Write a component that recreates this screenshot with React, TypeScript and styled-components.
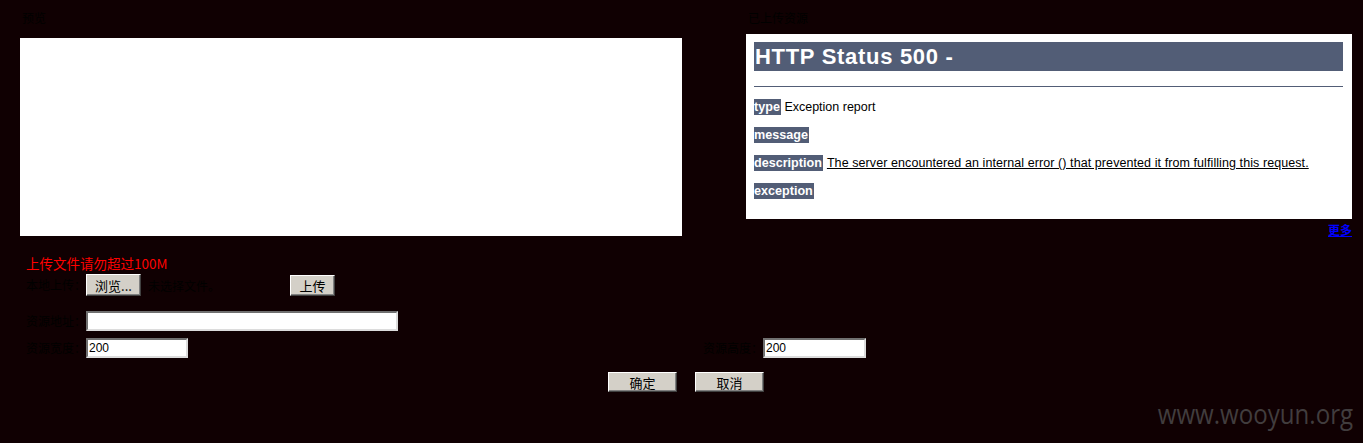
import React from "react";
import styled, { createGlobalStyle } from "styled-components";

const GlobalStyle = createGlobalStyle`
  html, body {
    margin: 0;
    padding: 0;
    background: #100002;
  }
  body {
    font-family: "Noto Sans CJK SC", "Liberation Sans", sans-serif;
    font-size: 12px;
    color: #000;
  }
`;

const Page = styled.div`
  position: relative;
  width: 1363px;
  height: 443px;
  overflow: hidden;
  background: #100002;
`;

const TopRow = styled.div`
  display: flex;
  align-items: flex-start;
  padding: 10px 11px 0 20px;
`;

const Column = styled.div<{ $width: number }>`
  display: flex;
  flex-direction: column;
  width: ${(p) => p.$width}px;
  &:last-child {
    margin-left: auto;
  }
`;

const SectionLabel = styled.div<{ $gap: number }>`
  font-size: 12px;
  line-height: 16px;
  height: 16px;
  margin: 0 0 ${(p) => p.$gap}px 2px;
  color: #000;
  white-space: nowrap;
`;

const PreviewBox = styled.div`
  height: 198px;
  background: #fff;
`;

const ReportFrame = styled.div`
  height: 185px;
  box-sizing: border-box;
  padding: 8px 9px 0 8px;
  background: #fff;
  overflow: hidden;
  font-family: "Liberation Sans", Arial, sans-serif;
  font-size: 12.5px;
  color: #000;
`;

const ReportTitle = styled.h1`
  margin: 0;
  height: 29px;
  padding-left: 1px;
  background: #525d76;
  color: #fff;
  font-family: "Liberation Sans", Arial, sans-serif;
  font-weight: bold;
  font-size: 22px;
  letter-spacing: 0.7px;
  line-height: 30px;
`;

const ReportRule = styled.div`
  height: 1px;
  margin-top: 15px;
  background: #525d76;
`;

const ReportLine = styled.p`
  margin: 12px 0 0 0;
  line-height: 16px;
  white-space: nowrap;
`;

const Tag = styled.b`
  display: inline-block;
  height: 16px;
  padding: 0 1px 0 0;
  background: #525d76;
  color: #fff;
  font-size: 12.6px;
  line-height: 16px;
  vertical-align: top;
`;

const Detail = styled.u`
  margin-left: 4px;
  letter-spacing: 0.08px;
`;

const MoreLink = styled.a`
  align-self: flex-end;
  margin-top: 3px;
  color: #0000ff;
  font-weight: bold;
  font-size: 12px;
  line-height: 16px;
  text-decoration: underline;
  cursor: pointer;
`;

const UploadForm = styled.div`
  display: flex;
  flex-direction: column;
  padding-left: 26px;
`;

const Warning = styled.div`
  margin-top: 16px;
  color: #ff0000;
  font-size: 13.5px;
  line-height: 18px;
`;

const FieldRow = styled.div<{ $top: number }>`
  display: flex;
  align-items: center;
  margin-top: ${(p) => p.$top}px;
`;

const FieldLabel = styled.span`
  width: 60px;
  font-size: 12px;
  line-height: 16px;
  color: #000;
  white-space: nowrap;
`;

const ClassicButton = styled.button<{ $w: number; $h?: number }>`
  width: ${(p) => p.$w}px;
  height: ${(p) => p.$h ?? 21}px;
  padding: 0;
  box-sizing: border-box;
  background: #d4d0c8;
  border: 1px solid;
  border-color: #fff #404040 #404040 #fff;
  box-shadow: inset -1px -1px 0 #808080;
  font-family: "Noto Sans CJK SC", sans-serif;
  font-size: 13px;
  line-height: 17px;
  color: #000;
`;

const FileStatus = styled.span`
  flex: 0 0 142px;
  margin-left: 7px;
  font-size: 12px;
  color: #000;
  white-space: nowrap;
`;

const TextField = styled.input<{ $w: number }>`
  width: ${(p) => p.$w}px;
  height: 20px;
  box-sizing: border-box;
  margin: 0;
  padding: 0 1px;
  background: #fff;
  border: 2px solid;
  border-color: #707070 #dcdcdc #dcdcdc #707070;
  font-family: "Liberation Sans", Arial, sans-serif;
  font-size: 12px;
  color: #000;
  outline: none;
`;

const FieldGroup = styled.div<{ $offset?: number }>`
  display: flex;
  align-items: center;
  margin-left: ${(p) => p.$offset ?? 0}px;
`;

const ActionRow = styled.div`
  display: flex;
  gap: 18px;
  margin-top: 14px;
  padding-left: 582px;
`;

const Watermark = styled.div`
  position: absolute;
  right: 10px;
  bottom: 13px;
  font-family: "Open Sans", sans-serif;
  font-size: 28px;
  line-height: 34px;
  color: #413d3e;
  transform: scaleX(0.86);
  transform-origin: right bottom;
  white-space: nowrap;
`;

export default function App() {
  return (
    <Page>
      <GlobalStyle />
      <TopRow>
        <Column $width={662}>
          <SectionLabel $gap={12}>预览</SectionLabel>
          <PreviewBox />
        </Column>
        <Column $width={606}>
          <SectionLabel $gap={8}>已上传资源</SectionLabel>
          <ReportFrame>
            <ReportTitle>HTTP Status 500 -</ReportTitle>
            <ReportRule />
            <ReportLine>
              <Tag>type</Tag> Exception report
            </ReportLine>
            <ReportLine>
              <Tag>message</Tag>
            </ReportLine>
            <ReportLine>
              <Tag>description</Tag>
              <Detail>
                The server encountered an internal error () that prevented it from fulfilling this request.
              </Detail>
            </ReportLine>
            <ReportLine>
              <Tag>exception</Tag>
            </ReportLine>
          </ReportFrame>
          <MoreLink>更多</MoreLink>
        </Column>
      </TopRow>
      <UploadForm>
        <Warning>上传文件请勿超过100M</Warning>
        <FieldRow $top={2}>
          <FieldLabel>本地上传：</FieldLabel>
          <ClassicButton $w={55} $h={22}>浏览...</ClassicButton>
          <FileStatus>未选择文件。</FileStatus>
          <ClassicButton $w={45}>上传</ClassicButton>
        </FieldRow>
        <FieldRow $top={15}>
          <FieldLabel>资源地址：</FieldLabel>
          <TextField $w={312} defaultValue="" />
        </FieldRow>
        <FieldRow $top={7}>
          <FieldGroup>
            <FieldLabel>资源宽度：</FieldLabel>
            <TextField $w={102} defaultValue="200" />
          </FieldGroup>
          <FieldGroup $offset={515}>
            <FieldLabel>资源高度：</FieldLabel>
            <TextField $w={103} defaultValue="200" />
          </FieldGroup>
        </FieldRow>
        <ActionRow>
          <ClassicButton $w={69} $h={20}>确定</ClassicButton>
          <ClassicButton $w={69} $h={20}>取消</ClassicButton>
        </ActionRow>
      </UploadForm>
      <Watermark>www.wooyun.org</Watermark>
    </Page>
  );
}
